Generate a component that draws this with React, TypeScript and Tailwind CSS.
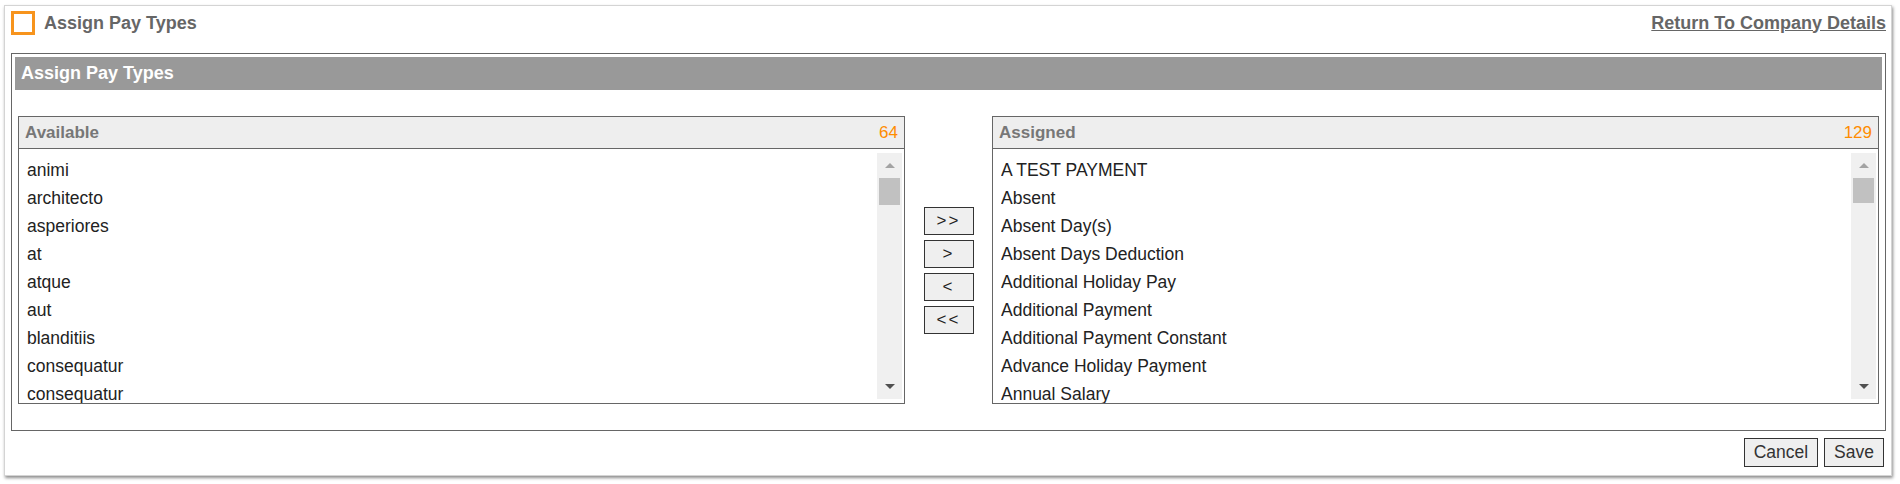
import React from 'react'

const available = [
  'animi',
  'architecto',
  'asperiores',
  'at',
  'atque',
  'aut',
  'blanditiis',
  'consequatur',
  'consequatur',
]

const assigned = [
  'A TEST PAYMENT',
  'Absent',
  'Absent Day(s)',
  'Absent Days Deduction',
  'Additional Holiday Pay',
  'Additional Payment',
  'Additional Payment Constant',
  'Advance Holiday Payment',
  'Annual Salary',
]

function FakeScrollbar({ thumb }: { thumb: number }) {
  return (
    <div className="my-[4px] mr-[2px] flex w-[25px] shrink-0 flex-col items-center bg-[#f0f0f0]">
      <div className="flex h-[25px] w-full items-center justify-center">
        <div className="h-0 w-0 border-x-[5px] border-b-[5px] border-x-transparent border-b-[#a3a3a3]" />
      </div>
      <div className="w-[21px] bg-[#c1c1c1]" style={{ height: thumb }} />
      <div className="flex-1" />
      <div className="flex h-[25px] w-full items-center justify-center">
        <div className="h-0 w-0 border-x-[5px] border-t-[5px] border-x-transparent border-t-[#505050]" />
      </div>
    </div>
  )
}

function PickList({ title, count, items, thumb }: { title: string; count: number; items: string[]; thumb: number }) {
  return (
    <div className="w-[887px] shrink-0 border border-[#666] bg-white">
      <div className="flex h-[32px] items-center justify-between border-b border-[#666] bg-[#eee] px-[6px]">
        <span className="text-[17px] font-bold text-[#777]">{title}</span>
        <span className="text-[17px] text-[#ff8c00]">{count}</span>
      </div>
      <div className="flex h-[254px]">
        <ul className="min-w-0 flex-1 overflow-hidden pl-[8px] pt-[7px]">
          {items.map((it, i) => (
            <li key={i} className="h-[28px] truncate text-[17.5px] leading-[28px] text-[#222]">
              {it}
            </li>
          ))}
        </ul>
        <FakeScrollbar thumb={thumb} />
      </div>
    </div>
  )
}

function MoveButton({ label }: { label: string }) {
  return (
    <button className="flex h-[28px] w-[50px] items-center justify-center border border-[#333] bg-[#efefef] text-[17px] tracking-[2px] text-[#222]">
      {label}
    </button>
  )
}

export default function App() {
  return (
    <div className="h-[484px] w-[1900px] bg-white font-['Liberation_Sans',Arial,sans-serif]">
      <div className="ml-[4px] pt-[5px]">
        <div className="w-[1888px] border border-[#d4d4d4] bg-white px-[6px] pb-[8px] shadow-[1px_2px_3px_rgba(0,0,0,0.45)]">
          <div className="mb-[18px] mt-[5px] flex h-[24px] items-center justify-between">
            <div className="flex items-center gap-[9px]">
              <div className="h-[24px] w-[24px] border-[3px] border-[#f7941d]" />
              <span className="text-[18px] font-bold text-[#666]">Assign Pay Types</span>
            </div>
            <a href="#" className="mr-[-1px] text-[18px] font-bold text-[#666] underline">
              Return To Company Details
            </a>
          </div>

          <div className="w-[1875px] border border-[#666] p-[3px] pb-[26px]">
            <div className="flex h-[33px] items-center bg-[#999] px-[6px]">
              <span className="text-[18px] font-bold text-white">Assign Pay Types</span>
            </div>
            <div className="mt-[26px] flex justify-between px-[3px]">
              <PickList title="Available" count={64} items={available} thumb={27} />
              <div className="mt-[91px] flex w-[50px] shrink-0 flex-col gap-[5px]">
                <MoveButton label=">>" />
                <MoveButton label=">" />
                <MoveButton label="<" />
                <MoveButton label="<<" />
              </div>
              <PickList title="Assigned" count={129} items={assigned} thumb={25} />
            </div>
          </div>

          <div className="mt-[7px] flex justify-end gap-[6px] pr-[1px]">
            <button className="h-[29px] border border-[#333] bg-[#efefef] px-[9px] text-[17.5px] text-[#333]">Cancel</button>
            <button className="h-[29px] border border-[#333] bg-[#efefef] px-[9px] text-[17.5px] text-[#333]">Save</button>
          </div>
        </div>
      </div>
    </div>
  )
}
